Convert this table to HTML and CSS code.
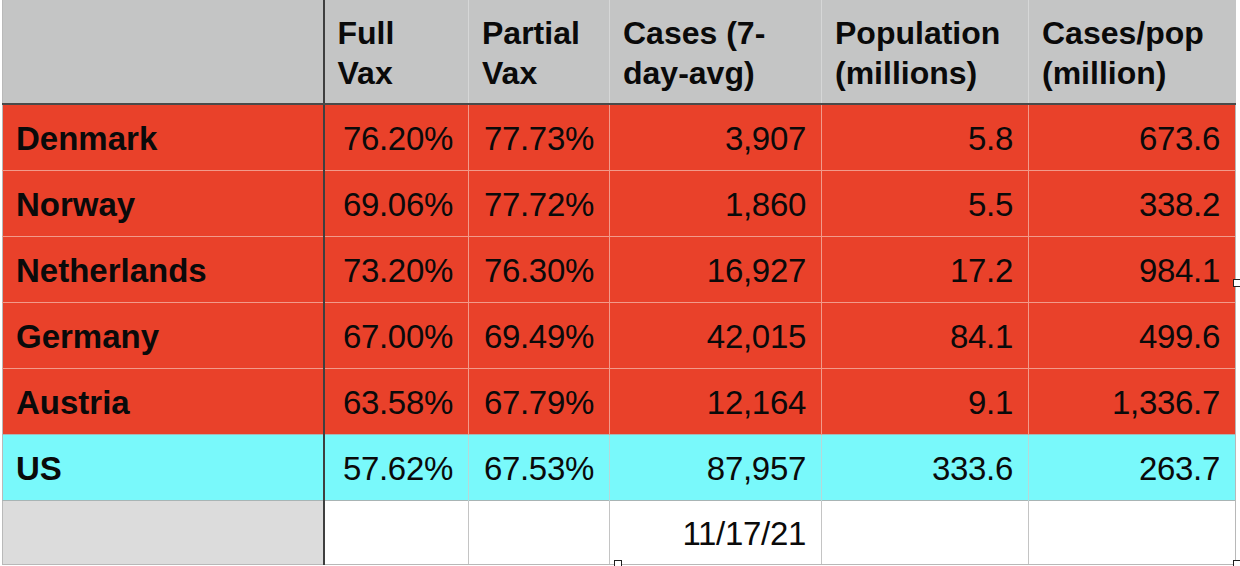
FILE: index.html
```html
<!DOCTYPE html>
<html>
<head>
<meta charset="utf-8">
<link rel="stylesheet" href="styles.css">
</head>
<body>
<div class="sheet">
  <table class="grid">
    <colgroup>
      <col class="c1"><col class="c2"><col class="c3"><col class="c4"><col class="c5"><col class="c6">
    </colgroup>
    <thead>
      <tr>
        <th class="label"></th>
        <th>Full<br>Vax</th>
        <th>Partial<br>Vax</th>
        <th>Cases (7-<br>day-avg)</th>
        <th>Population<br>(millions)</th>
        <th>Cases/pop<br>(million)</th>
      </tr>
    </thead>
    <tbody>
      <tr class="red">
        <th class="label">Denmark</th>
        <td>76.20%</td><td>77.73%</td><td>3,907</td><td>5.8</td><td>673.6</td>
      </tr>
      <tr class="red">
        <th class="label">Norway</th>
        <td>69.06%</td><td>77.72%</td><td>1,860</td><td>5.5</td><td>338.2</td>
      </tr>
      <tr class="red">
        <th class="label">Netherlands</th>
        <td>73.20%</td><td>76.30%</td><td>16,927</td><td>17.2</td><td>984.1</td>
      </tr>
      <tr class="red">
        <th class="label">Germany</th>
        <td>67.00%</td><td>69.49%</td><td>42,015</td><td>84.1</td><td>499.6</td>
      </tr>
      <tr class="red">
        <th class="label">Austria</th>
        <td>63.58%</td><td>67.79%</td><td>12,164</td><td>9.1</td><td>1,336.7</td>
      </tr>
      <tr class="cyan">
        <th class="label">US</th>
        <td>57.62%</td><td>67.53%</td><td>87,957</td><td>333.6</td><td>263.7</td>
      </tr>
      <tr class="blank">
        <th class="label"></th>
        <td></td><td></td><td>11/17/21</td><td></td><td></td>
      </tr>
    </tbody>
  </table>
  <span class="handle h-right"></span>
  <span class="handle h-bottom-mid"></span>
  <span class="handle h-bottom-right"></span>
</div>
</body>
</html>
```
FILE: styles.css
```css
html, body {
  margin: 0;
  padding: 0;
  background: #ffffff;
}

body {
  font-family: "Liberation Sans", Arial, Helvetica, sans-serif;
  color: #0a0a0a;
}

.sheet {
  position: relative;
  width: 1240px;
  height: 566px;
  overflow: hidden;
}

.grid {
  border-collapse: collapse;
  table-layout: fixed;
  margin-left: 2px;
  width: 1233px;
  border-left: 1px solid #b9b9b9;
}

.c1 { width: 321px; }
.c2 { width: 145px; }
.c3 { width: 141px; }
.c4 { width: 212px; }
.c5 { width: 207px; }
.c6 { width: 207px; }

thead th {
  background: #c4c5c5;
  height: 100px;
  font-size: 32px;
  line-height: 40px;
  font-weight: bold;
  text-align: left;
  vertical-align: middle;
  padding: 3px 6px 0 13px;
  border-left: 1px solid #d6d7d7;
  border-bottom: 2px solid #4a4a4a;
  white-space: nowrap;
}

thead th.label {
  border-left: none;
}

tbody th, tbody td {
  height: 62px;
  padding: 3px 15px 0 14px;
  font-size: 33px;
  line-height: 38px;
  vertical-align: middle;
  white-space: nowrap;
}

tbody th {
  text-align: left;
  font-weight: bold;
  padding-left: 13px;
}

tbody td {
  text-align: right;
  font-weight: normal;
  letter-spacing: -0.3px;
}

.grid th.label {
  border-right: 2px solid #3f3f3f;
}

.red th, .red td {
  background: #e9412a;
  border-top: 1px solid #f29a8a;
  border-left: 1px solid #f29a8a;
}

.cyan th, .cyan td {
  background: #79f9fb;
  border-top: 1px solid #a9b6b6;
  border-left: 1px solid #b7d8d8;
}

.blank th, .blank td {
  background: #ffffff;
  border-top: 1px solid #a8b4b4;
  border-left: 1px solid #c4c4c4;
  border-bottom: 1px solid #b8b8b8;
  height: 60px;
}

.blank th.label {
  background: #dcdcdc;
}

.red th.label, .cyan th.label, .blank th.label {
  border-left: none;
}

.grid tr td:last-child {
  border-right: 1px solid #b8b8b8;
}

.handle {
  position: absolute;
  width: 6px;
  height: 6px;
  background: #ffffff;
  border: 1px solid #222222;
}

.h-right { left: 1233px; top: 279px; }
.h-bottom-mid { left: 614px; top: 560px; }
.h-bottom-right { left: 1233px; top: 560px; }
```
